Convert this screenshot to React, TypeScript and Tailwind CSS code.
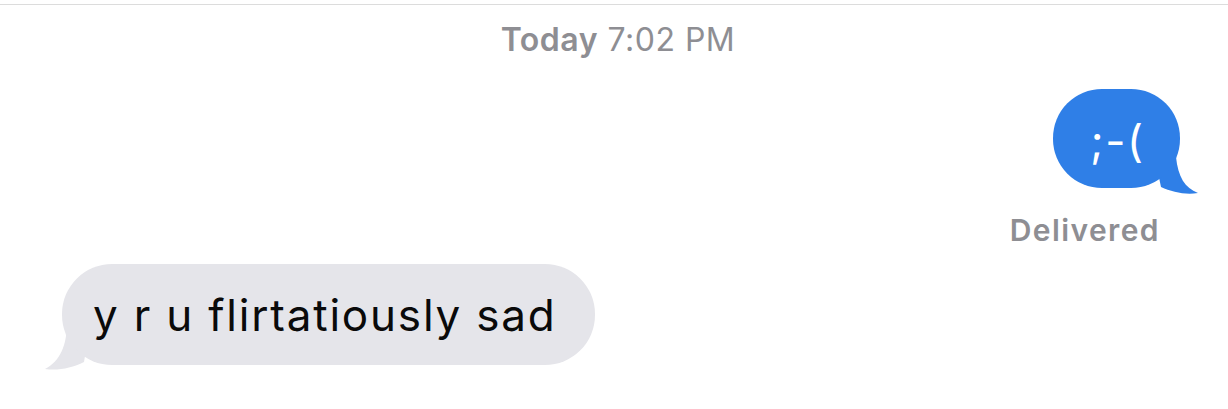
export default function App() {
    return (
        <div className="w-full h-[409px] bg-white overflow-hidden font-['Inter','Liberation_Sans',sans-serif]">
            <div className="mt-[4px] h-px bg-[#dcdcdc]" />

            {/* timestamp */}
            <div className="mt-[15px] pl-[8px] text-center text-[32px] leading-[40px] tracking-[0.5px] text-[#8e8e93]">
                <span className="font-semibold">Today</span> 7:02 PM
            </div>

            {/* outgoing */}
            <div className="mt-[29px] flex justify-end pr-[48px]">
                <div className="relative">
                    <svg className="absolute left-0 top-0 overflow-visible" width="127" height="99">
                        <path d="M100 60 L123 68 C125 88 132 99 145 104 C132 106 119 103 108 98 Z" fill="#2f7fe7" />
                    </svg>
                    <div className="relative w-[127px] h-[99px] rounded-[49px] bg-[#2f7fe7] flex justify-center pt-[27px] pl-[2px]">
                        <span className="text-white text-[44px] leading-[50px] tracking-[1.7px]">;-(</span>
                    </div>
                </div>
            </div>

            <div className="mt-[24px] flex justify-end pr-[68px]">
                <span className="text-[30px] leading-[36px] font-semibold tracking-[1.4px] text-[#8e8e93]">Delivered</span>
            </div>

            {/* incoming */}
            <div className="mt-[16px] flex pl-[62px]">
                <div className="relative">
                    <svg className="absolute left-0 top-0 overflow-visible" width="533" height="101">
                        <path d="M30 50 L5 58 C5 82 -2 97 -17 105 C-4 107 10 104 22 98 Z" fill="#e5e5ea" />
                    </svg>
                    <div className="relative w-[533px] h-[101px] rounded-[50px] bg-[#e5e5ea] pl-[31px] pt-[26px]">
                        <span className="text-[#0a0a0a] text-[44px] leading-[50px] tracking-[1.8px] whitespace-nowrap">
                            y r u flirtatiously sad
                        </span>
                    </div>
                </div>
            </div>
        </div>
    );
}
